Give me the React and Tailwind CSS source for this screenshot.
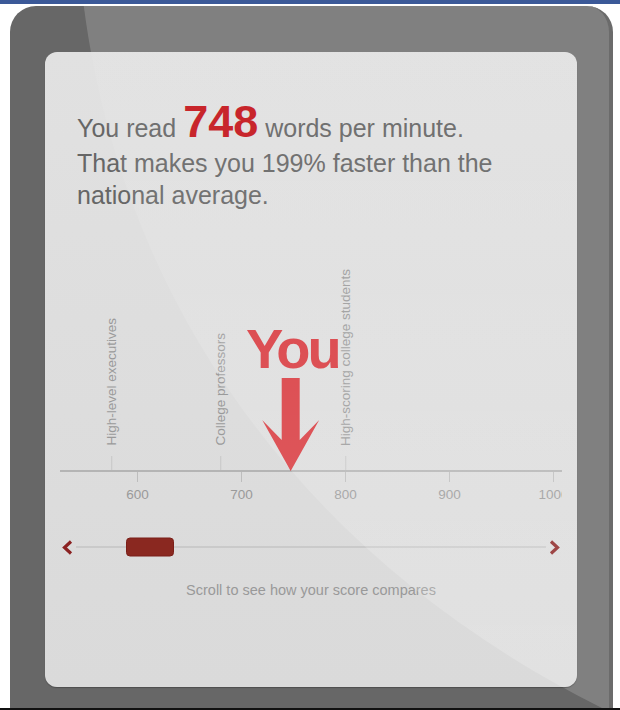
import React from "react";

const GLOSS = "M83,0 C120,300 300,560 610,712 L700,712 L700,0 Z";
const xpos = (v) => 77 + (v - 600) * 1.04;

const ticks = [600, 700, 800, 900, 1000];
const markers = [
  { label: "High-level executives", v: 575 },
  { label: "College professors", v: 680 },
  { label: "High-scoring college students", v: 800 },
];

function Chevron({ dir }) {
  return (
    <svg width="11" height="15" viewBox="0 0 11 15" className="shrink-0">
      <polyline
        points={dir === "left" ? "9,1.5 2.5,7.5 9,13.5" : "2,1.5 8.5,7.5 2,13.5"}
        fill="none"
        stroke="#8b2222"
        strokeWidth="3.2"
        strokeLinejoin="miter"
      />
    </svg>
  );
}

export default function App() {
  return (
    <div className="w-[620px] h-[710px] bg-white overflow-hidden font-['Liberation_Sans',Arial,Helvetica,sans-serif]">
      <div className="h-[4px] bg-[#3b5998]" />
      <div className="mt-[2px] ml-[10px] w-[603px] h-[702px] rounded-t-[26px] bg-[#676767] border-r-[4px] border-r-[#6b6b6b] relative overflow-hidden pt-[46px] pl-[35px]">
        <svg
          className="absolute inset-0 w-full h-full pointer-events-none"
          viewBox="10 6 599 702"
          preserveAspectRatio="none"
        >
          <path d={GLOSS} fill="#ffffff" fillOpacity="0.17" />
        </svg>

        <div className="relative w-[532px] h-[635px] rounded-[12px] overflow-hidden bg-gradient-to-b from-[#e1e1e1] to-[#dadada] shadow-[0_1px_1px_rgba(0,0,0,0.25)] flex flex-col">
          <p className="pt-[45px] px-[32px] text-[25px] leading-[32px] text-[#666666]">
            You read{" "}
            <span className="text-[45px] font-bold leading-[50px] text-[#c4161c]">748</span>{" "}
            words per minute.
            <br />
            That makes you 199% faster than the national average.
          </p>

          <div className="relative ml-[15px] mt-[49px] w-[502px] h-[250px] shrink-0 overflow-hidden">
            <div className="absolute left-0 right-0 top-[210px] h-[2px] bg-[#b4b4b4]" />
            {ticks.map((t) => (
              <React.Fragment key={t}>
                <div
                  className="absolute top-[212px] h-[10px] w-px bg-[#bdbdbd]"
                  style={{ left: xpos(t) }}
                />
                <div
                  className="absolute top-[228px] -translate-x-1/2 text-[13.5px] leading-none text-[#9a9a9a]"
                  style={{ left: xpos(t) + 0.5 }}
                >
                  {t}
                </div>
              </React.Fragment>
            ))}
            {markers.map((m) => (
              <div
                key={m.label}
                className="absolute bottom-[40px] -translate-x-1/2 flex flex-col items-center"
                style={{ left: xpos(m.v) + 0.5 }}
              >
                <span className="[writing-mode:vertical-rl] rotate-180 text-[13.5px] leading-none text-[#9a9a9a] whitespace-nowrap">
                  {m.label}
                </span>
                <div className="mt-[10px] h-[14px] w-px bg-[#c6c6c6]" />
              </div>
            ))}
            <div
              className="absolute bottom-[39px] -translate-x-1/2 flex flex-col items-center"
              style={{ left: xpos(748) }}
            >
              <span className="text-[56px] font-bold leading-none tracking-[-3px] pl-[3px] text-[#d8383d]">
                You
              </span>
              <svg width="57" height="93" viewBox="0 0 57 93" className="mt-[1px]">
                <polygon
                  points="19.5,0 37.5,0 37.5,62 57,42 28.5,93 0,42 19.5,62"
                  fill="#d8383d"
                />
              </svg>
            </div>
          </div>

          <div className="mt-[27px] ml-[17px] mr-[17px] h-[20px] flex items-center">
            <Chevron dir="left" />
            <div className="relative flex-1 mx-[3px] h-[2px] bg-[#cacaca]">
              <div className="absolute left-[50px] top-1/2 -translate-y-1/2 w-[48px] h-[19px] rounded-[4px] bg-[#8a2820] border border-[#7a1f19]" />
            </div>
            <Chevron dir="right" />
          </div>

          <div className="mt-[26px] text-center text-[14.5px] leading-none text-[#999999]">
            Scroll to see how your score compares
          </div>

          <svg
            className="absolute inset-0 w-full h-full pointer-events-none"
            viewBox="45 52 532 635"
            preserveAspectRatio="none"
          >
            <defs>
              <linearGradient id="sg" x1="0" y1="0" x2="0" y2="1">
                <stop offset="0" stopColor="#ffffff" stopOpacity="0.04" />
                <stop offset="1" stopColor="#ffffff" stopOpacity="0.2" />
              </linearGradient>
            </defs>
            <path d={GLOSS} fill="url(#sg)" />
          </svg>
        </div>
      </div>
      <div className="h-[2px] bg-[#111111]" />
    </div>
  );
}
